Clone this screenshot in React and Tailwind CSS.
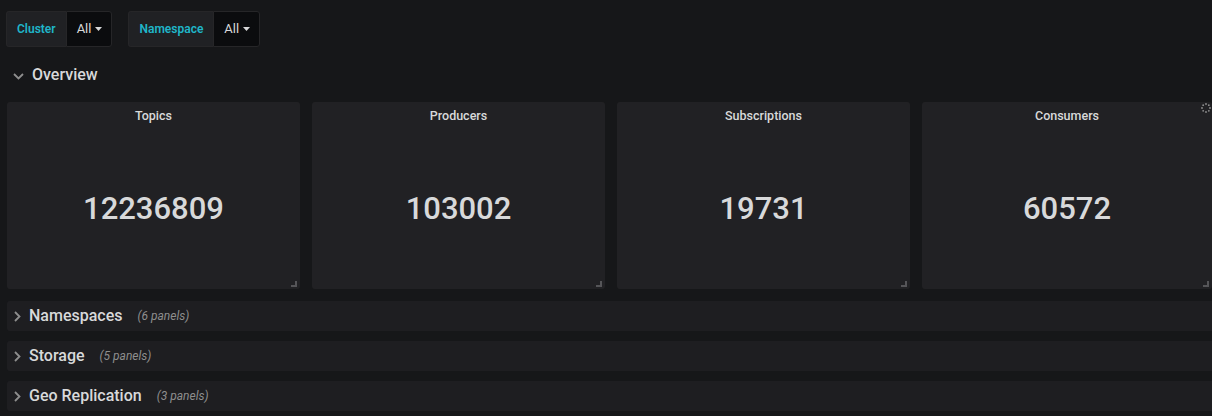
import React from 'react';

const stats = [
  { title: 'Topics', value: '12236809' },
  { title: 'Producers', value: '103002' },
  { title: 'Subscriptions', value: '19731' },
  { title: 'Consumers', value: '60572', loading: true },
];

const rows = [
  { title: 'Namespaces', count: 6 },
  { title: 'Storage', count: 5 },
  { title: 'Geo Replication', count: 3 },
];

function Variable({ label }) {
  return (
    <div className="flex h-[36px]">
      <div className="flex items-center px-[10px] bg-[#202124] border border-[#262628] border-r-0 rounded-l-[3px] text-[12px] font-semibold text-[#1fb6c9]">
        {label}
      </div>
      <div className="flex items-center gap-[4px] pl-[10px] pr-[9px] bg-[#0b0c0e] border border-[#262628] rounded-r-[3px] text-[13px] text-[#d8d9da]">
        All
        <svg width="7" height="4" viewBox="0 0 7 4"><path d="M0 0h7L3.5 4z" fill="#d8d9da" /></svg>
      </div>
    </div>
  );
}

function StatPanel({ title, value, loading, last }) {
  return (
    <div className={`relative h-[187px] bg-[#212124] rounded-[3px] flex flex-col ${last ? 'flex-1' : 'w-[293px]'}`}>
      <div className="h-[28px] flex items-center justify-center text-[12.5px] font-medium text-[#d8d9da]">{title}</div>
      <div className="flex-1 flex items-center justify-center text-[31px] font-medium text-[#d8d9da]">{value}</div>
      {loading && (
        <svg className="absolute right-[1px] top-[1px]" width="10" height="10" viewBox="0 0 10 10">
          {[0, 45, 90, 135, 180, 225, 270, 315].map((a) => (
            <circle key={a} cx={5 + 4 * Math.cos((a * Math.PI) / 180)} cy={5 + 4 * Math.sin((a * Math.PI) / 180)} r="0.9" fill="#8e8e8e" />
          ))}
        </svg>
      )}
      <svg className="absolute right-[3px] bottom-[2px]" width="6" height="6" viewBox="0 0 6 6">
        <path d="M6 0v6H0V4h4V0z" fill="#555558" />
      </svg>
    </div>
  );
}

export default function App() {
  return (
    <div className="w-[1212px] h-[416px] overflow-hidden bg-[#161719] font-['Roboto',sans-serif]">
      {/* template variables */}
      <div className="flex gap-[16px] pl-[6px] pt-[11px]">
        <Variable label="Cluster" />
        <Variable label="Namespace" />
      </div>

      {/* expanded row */}
      <div className="flex items-center h-[30px] mt-[13px] pl-[13px]">
        <svg width="11" height="7" viewBox="0 0 11 7" className="mt-[3px]">
          <path d="M1 1l4.5 4.5L10 1" fill="none" stroke="#8e8e8e" strokeWidth="1.8" />
        </svg>
        <span className="ml-[8px] text-[16px] font-medium text-[#d8d9da]">Overview</span>
      </div>

      <div className="flex gap-[12px] pl-[7px] mt-[12px]">
        {stats.map((s, i) => (
          <StatPanel key={s.title} {...s} last={i === stats.length - 1} />
        ))}
      </div>

      {/* collapsed rows */}
      <div className="flex flex-col gap-[10px] pl-[7px] mt-[12px]">
        {rows.map((r) => (
          <div key={r.title} className="flex items-center h-[30px] bg-[#1e1e21] rounded-l-[3px] pl-[7px]">
            <svg width="7" height="11" viewBox="0 0 7 11">
              <path d="M1 1l4.5 4.5L1 10" fill="none" stroke="#8e8e8e" strokeWidth="1.8" />
            </svg>
            <span className="ml-[8px] text-[16px] font-medium text-[#d8d9da]">{r.title}</span>
            <span className="ml-[15px] text-[12px] italic text-[#8e8e8e]">({r.count} panels)</span>
          </div>
        ))}
      </div>
    </div>
  );
}
